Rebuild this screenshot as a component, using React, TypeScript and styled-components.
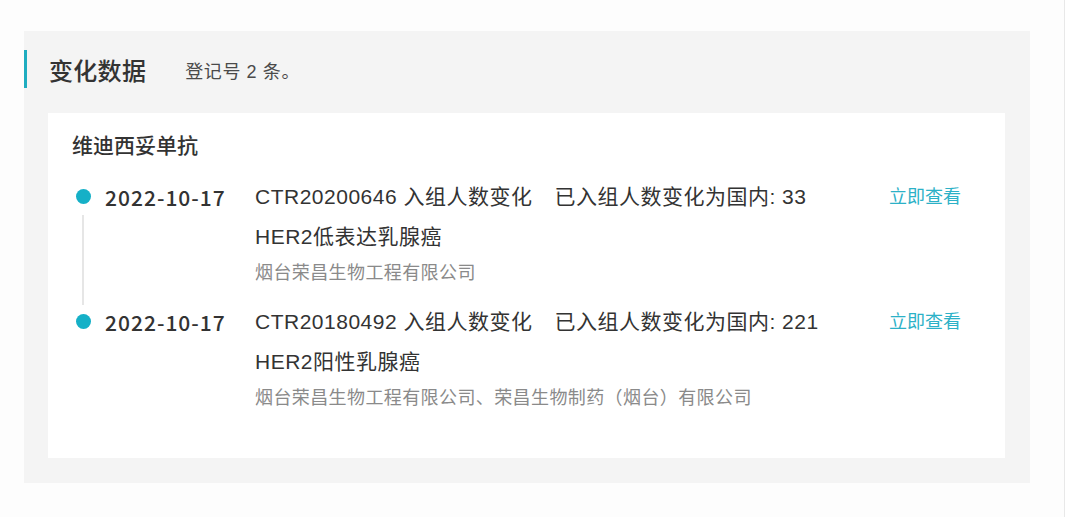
import React from "react";
import styled, { createGlobalStyle } from "styled-components";

const GlobalStyle = createGlobalStyle`
  html, body {
    margin: 0;
    padding: 0;
    background: #ffffff;
  }
  body {
    font-family: "Liberation Sans", "Noto Sans CJK SC", sans-serif;
    color: #333333;
  }
`;

const Page = styled.div`
  width: 1065px;
  height: 517px;
  box-sizing: border-box;
  border-right: 1px solid #e8e8e8;
  padding: 31px 0 0 24px;
  background: #fdfdfd;
`;

const Panel = styled.section`
  width: 1006px;
  height: 452px;
  box-sizing: border-box;
  background: #f4f4f4;
  padding: 19px 25px 25px 0;
  display: flex;
  flex-direction: column;
  gap: 25px;
`;

const Header = styled.div`
  display: flex;
  align-items: center;
  height: 38px;
  border-left: 3px solid #1fadc0;
  padding-left: 22px;
`;

const Title = styled.h2`
  margin: 0;
  font-family: "Noto Sans CJK SC", sans-serif;
  font-size: 24px;
  font-weight: 500;
  color: #333333;
  letter-spacing: 0.3px;
`;

const Subtitle = styled.span`
  margin-left: 39px;
  font-size: 18px;
  color: #4a4a4a;
  padding-top: 2px;
  letter-spacing: 0.6px;
`;

const Card = styled.div`
  margin-left: 24px;
  flex: 1;
  background: #ffffff;
  padding: 18px 44px 0 24px;
  display: flex;
  flex-direction: column;
`;

const DrugName = styled.div`
  font-size: 21px;
  line-height: 30px;
  font-weight: 500;
  color: #333333;
  margin-bottom: 16px;
`;

const Row = styled.div<{ $last?: boolean }>`
  display: grid;
  grid-template-columns: 33px 150px 1fr auto;
  padding-bottom: ${(p) => (p.$last ? "0" : "13px")};
`;

const Track = styled.div`
  display: flex;
  flex-direction: column;
  align-items: center;
  width: 22px;
`;

const Dot = styled.span`
  width: 15px;
  height: 15px;
  border-radius: 50%;
  background: #15b0c7;
  margin-top: 12px;
  flex-shrink: 0;
`;

const Line = styled.span`
  width: 2px;
  flex: 1;
  background: #e6e6e6;
  margin-top: 11px;
  margin-bottom: -16px;
`;

const DateText = styled.div`
  font-family: "Noto Sans CJK SC", sans-serif;
  font-size: 21px;
  line-height: 40px;
  font-weight: 500;
  color: #333333;
  letter-spacing: 1px;
`;

const Content = styled.div`
  display: flex;
  flex-direction: column;
`;

const MainLine = styled.div`
  font-size: 21px;
  line-height: 40px;
  color: #333333;
  white-space: nowrap;
  letter-spacing: 0.5px;
`;

const Gap = styled.span`
  display: inline-block;
  width: 22px;
`;

const Company = styled.div`
  font-size: 18px;
  line-height: 32px;
  color: #8a8a8a;
  white-space: nowrap;
  letter-spacing: 0.4px;
`;

const Action = styled.a`
  font-size: 18px;
  line-height: 40px;
  color: #2cb1c7;
  text-decoration: none;
  cursor: pointer;
`;

type Item = {
  date: string;
  code: string;
  change: string;
  detail: string;
  disease: string;
  company: string;
};

const items: Item[] = [
  {
    date: "2022-10-17",
    code: "CTR20200646",
    change: "入组人数变化",
    detail: "已入组人数变化为国内: 33",
    disease: "HER2低表达乳腺癌",
    company: "烟台荣昌生物工程有限公司",
  },
  {
    date: "2022-10-17",
    code: "CTR20180492",
    change: "入组人数变化",
    detail: "已入组人数变化为国内: 221",
    disease: "HER2阳性乳腺癌",
    company: "烟台荣昌生物工程有限公司、荣昌生物制药（烟台）有限公司",
  },
];

export default function App() {
  return (
    <>
      <GlobalStyle />
      <Page>
        <Panel>
          <Header>
            <Title>变化数据</Title>
            <Subtitle>登记号 2 条。</Subtitle>
          </Header>
          <Card>
            <DrugName>维迪西妥单抗</DrugName>
            {items.map((it, i) => {
              const last = i === items.length - 1;
              return (
                <Row key={it.code} $last={last}>
                  <Track>
                    <Dot />
                    {!last && <Line />}
                  </Track>
                  <DateText>{it.date}</DateText>
                  <Content>
                    <MainLine>
                      {it.code} {it.change}
                      <Gap />
                      {it.detail}
                    </MainLine>
                    <MainLine>{it.disease}</MainLine>
                    <Company>{it.company}</Company>
                  </Content>
                  <Action>立即查看</Action>
                </Row>
              );
            })}
          </Card>
        </Panel>
      </Page>
    </>
  );
}
